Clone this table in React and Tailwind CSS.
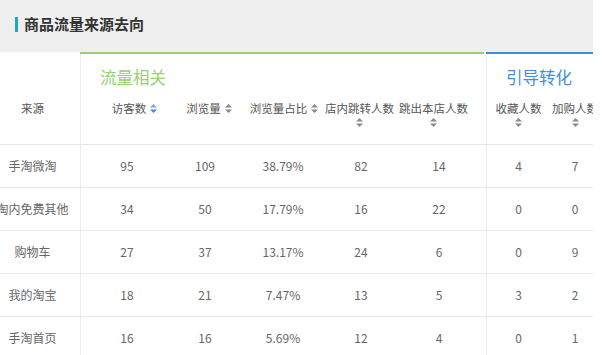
import React from "react";

const rows = [
  ["手淘微淘", "95", "109", "38.79%", "82", "14", "4", "7"],
  ["淘内免费其他", "34", "50", "17.79%", "16", "22", "0", "0"],
  ["购物车", "27", "37", "13.17%", "24", "6", "0", "9"],
  ["我的淘宝", "18", "21", "7.47%", "13", "5", "3", "2"],
  ["手淘首页", "16", "16", "5.69%", "12", "4", "0", "1"],
];

function SortIcon({ active = false }) {
  return (
    <svg width="7" height="9" viewBox="0 0 7 9" className="shrink-0">
      <path d="M3.5 0 L7 3.6 H0 Z" fill={active ? "#8aa6c8" : "#8a8a8a"} />
      <path d="M0 5.4 H7 L3.5 9 Z" fill={active ? "#3b8de0" : "#8a8a8a"} />
    </svg>
  );
}

function InlineHead({ label, active, className }) {
  return (
    <div className={"flex justify-center " + className}>
      <div className="flex items-center gap-[4px] h-[16px] whitespace-nowrap">
        <span className="leading-[16px]">{label}</span>
        <SortIcon active={active} />
      </div>
    </div>
  );
}

function StackHead({ label, className }) {
  return (
    <div className={"flex flex-col items-center " + className}>
      <span className="leading-[16px] whitespace-nowrap">{label}</span>
      <div className="h-[12px] flex items-center">
        <SortIcon />
      </div>
    </div>
  );
}

export default function App() {
  return (
    <div
      className="w-[602px] h-[355px] overflow-hidden bg-white"
      style={{ fontFamily: '"Noto Sans CJK SC", "Noto Sans", sans-serif' }}
    >
      <div className="w-[593px] overflow-hidden">
        {/* Title */}
        <div className="h-[52px] bg-[#efefef] pt-[16px] pl-[15px]">
          <div className="flex items-center h-[16px]">
            <div className="w-[3px] h-[15px] bg-[#22a8b4]" />
            <span className="ml-[6px] text-[15px] leading-[16px] font-bold text-[#333]">
              商品流量来源去向
            </span>
          </div>
        </div>

        {/* Header */}
        <div className="flex w-[600px] h-[93px] border-b border-[#e6e6e6] text-[11.5px] text-[#555]">
          <div className="w-[81px] shrink-0 border-r border-[#ededed] pr-[15px] pt-[48px] flex justify-center">
            <span className="leading-[16px]">来源</span>
          </div>
          <div className="w-[405px] shrink-0 flex flex-col">
            <div className="h-[2px] bg-[#96d26f] mr-[2px] -ml-[1px]" />
            <div className="h-[46px] flex items-center pl-[19px]">
              <span className="text-[16.5px] text-[#93d26c]">流量相关</span>
            </div>
            <div className="flex">
              <InlineHead label="访客数" active className="w-[85px] pl-[22px]" />
              <InlineHead label="浏览量" className="w-[78px] pl-[8px]" />
              <InlineHead label="浏览量占比" className="w-[78px] pl-[2px]" />
              <StackHead label="店内跳转人数" className="w-[78px] pr-[3px]" />
              <StackHead label="跳出本店人数" className="w-[86px] pr-[19px]" />
            </div>
          </div>
          <div className="w-[114px] shrink-0 border-l border-[#ededed] flex flex-col">
            <div className="h-[2px] bg-[#3a8de2] -ml-[1px]" />
            <div className="h-[46px] flex items-center pl-[19px]">
              <span className="text-[16.5px] text-[#3f8fdc]">引导转化</span>
            </div>
            <div className="flex">
              <StackHead label="收藏人数" className="w-[63px]" />
              <StackHead label="加购人数" className="w-[50px]" />
            </div>
          </div>
        </div>

        {/* Rows */}
        {rows.map((r, i) => (
          <div
            key={i}
            className="flex w-[600px] h-[43px] border-b border-[#e9e9e9] text-[12px] text-[#666]"
          >
            <div className="w-[81px] shrink-0 border-r border-[#ededed] pr-[15px] flex items-center justify-center whitespace-nowrap">
              {r[0]}
            </div>
            <div className="w-[85px] shrink-0 pl-[7px] flex items-center justify-center">{r[1]}</div>
            <div className="w-[78px] shrink-0 flex items-center justify-center">{r[2]}</div>
            <div className="w-[78px] shrink-0 flex items-center justify-center">{r[3]}</div>
            <div className="w-[78px] shrink-0 flex items-center justify-center">{r[4]}</div>
            <div className="w-[86px] shrink-0 pr-[8px] flex items-center justify-center">{r[5]}</div>
            <div className="w-[64px] shrink-0 border-l border-[#ededed] flex items-center justify-center">{r[6]}</div>
            <div className="w-[50px] shrink-0 flex items-center justify-center">{r[7]}</div>
          </div>
        ))}
      </div>
    </div>
  );
}
